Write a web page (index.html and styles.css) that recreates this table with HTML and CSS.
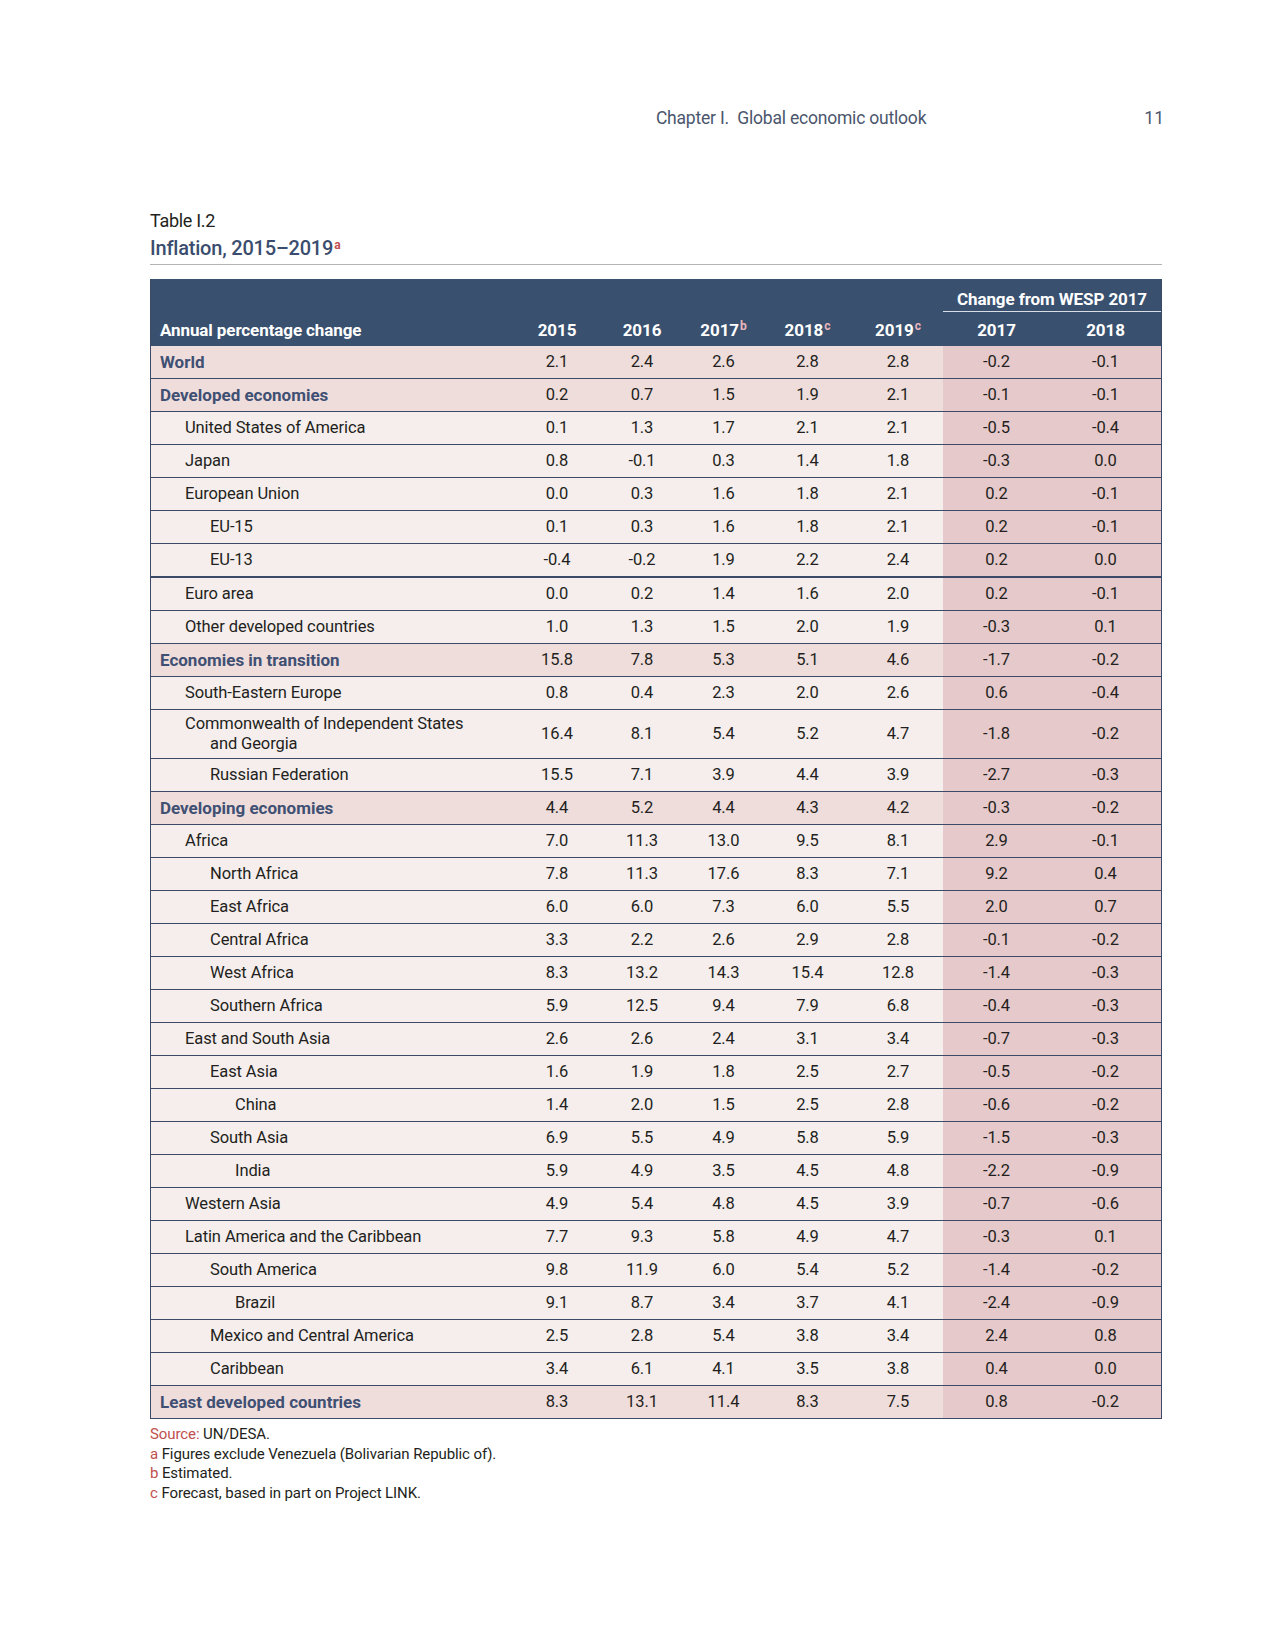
FILE: index.html
```html
<!DOCTYPE html>
<html lang="en">
<head>
<meta charset="utf-8">
<title>Table I.2 Inflation, 2015–2019</title>
<link rel="stylesheet" href="styles.css">
</head>
<body>
<div class="page">
  <header class="running">
    <span class="chapter">Chapter I.&nbsp; Global economic outlook</span>
    <span class="folio">11</span>
  </header>

  <div class="caption">
    <div class="table-no">Table I.2</div>
    <div class="table-title">Inflation, 2015–2019<sup class="fn-red">a</sup></div>
  </div>

  <div class="tbl-wrap">
  <table class="data">
    <colgroup>
      <col class="c-label"><col class="c-a"><col class="c-b"><col class="c-c"><col class="c-d"><col class="c-e"><col class="c-f"><col class="c-g">
    </colgroup>
    <thead>
      <tr class="h1">
        <th></th><th></th><th></th><th></th><th></th><th></th>
        <th colspan="2" class="wesp-span">Change from WESP 2017</th>
      </tr>
      <tr class="h2">
        <th class="lbl">Annual percentage change</th>
        <th>2015</th><th>2016</th><th>2017<sup>b</sup></th><th>2018<sup>c</sup></th><th>2019<sup>c</sup></th>
        <th>2017</th><th>2018</th>
      </tr>
    </thead>
    <tbody>
      <tr class="grp"><td class="lbl l0">World</td><td>2.1</td><td>2.4</td><td>2.6</td><td>2.8</td><td>2.8</td><td class="w">-0.2</td><td class="w">-0.1</td></tr>
      <tr class="grp"><td class="lbl l0">Developed economies</td><td>0.2</td><td>0.7</td><td>1.5</td><td>1.9</td><td>2.1</td><td class="w">-0.1</td><td class="w">-0.1</td></tr>
      <tr><td class="lbl l1">United States of America</td><td>0.1</td><td>1.3</td><td>1.7</td><td>2.1</td><td>2.1</td><td class="w">-0.5</td><td class="w">-0.4</td></tr>
      <tr><td class="lbl l1">Japan</td><td>0.8</td><td>-0.1</td><td>0.3</td><td>1.4</td><td>1.8</td><td class="w">-0.3</td><td class="w">0.0</td></tr>
      <tr><td class="lbl l1">European Union</td><td>0.0</td><td>0.3</td><td>1.6</td><td>1.8</td><td>2.1</td><td class="w">0.2</td><td class="w">-0.1</td></tr>
      <tr><td class="lbl l2">EU-15</td><td>0.1</td><td>0.3</td><td>1.6</td><td>1.8</td><td>2.1</td><td class="w">0.2</td><td class="w">-0.1</td></tr>
      <tr class="thick"><td class="lbl l2">EU-13</td><td>-0.4</td><td>-0.2</td><td>1.9</td><td>2.2</td><td>2.4</td><td class="w">0.2</td><td class="w">0.0</td></tr>
      <tr><td class="lbl l1">Euro area</td><td>0.0</td><td>0.2</td><td>1.4</td><td>1.6</td><td>2.0</td><td class="w">0.2</td><td class="w">-0.1</td></tr>
      <tr><td class="lbl l1">Other developed countries</td><td>1.0</td><td>1.3</td><td>1.5</td><td>2.0</td><td>1.9</td><td class="w">-0.3</td><td class="w">0.1</td></tr>
      <tr class="grp"><td class="lbl l0">Economies in transition</td><td>15.8</td><td>7.8</td><td>5.3</td><td>5.1</td><td>4.6</td><td class="w">-1.7</td><td class="w">-0.2</td></tr>
      <tr><td class="lbl l1">South-Eastern Europe</td><td>0.8</td><td>0.4</td><td>2.3</td><td>2.0</td><td>2.6</td><td class="w">0.6</td><td class="w">-0.4</td></tr>
      <tr class="tall"><td class="lbl hang">Commonwealth of Independent States and Georgia</td><td>16.4</td><td>8.1</td><td>5.4</td><td>5.2</td><td>4.7</td><td class="w">-1.8</td><td class="w">-0.2</td></tr>
      <tr><td class="lbl l2">Russian Federation</td><td>15.5</td><td>7.1</td><td>3.9</td><td>4.4</td><td>3.9</td><td class="w">-2.7</td><td class="w">-0.3</td></tr>
      <tr class="grp"><td class="lbl l0">Developing economies</td><td>4.4</td><td>5.2</td><td>4.4</td><td>4.3</td><td>4.2</td><td class="w">-0.3</td><td class="w">-0.2</td></tr>
      <tr><td class="lbl l1">Africa</td><td>7.0</td><td>11.3</td><td>13.0</td><td>9.5</td><td>8.1</td><td class="w">2.9</td><td class="w">-0.1</td></tr>
      <tr><td class="lbl l2">North Africa</td><td>7.8</td><td>11.3</td><td>17.6</td><td>8.3</td><td>7.1</td><td class="w">9.2</td><td class="w">0.4</td></tr>
      <tr><td class="lbl l2">East Africa</td><td>6.0</td><td>6.0</td><td>7.3</td><td>6.0</td><td>5.5</td><td class="w">2.0</td><td class="w">0.7</td></tr>
      <tr><td class="lbl l2">Central Africa</td><td>3.3</td><td>2.2</td><td>2.6</td><td>2.9</td><td>2.8</td><td class="w">-0.1</td><td class="w">-0.2</td></tr>
      <tr><td class="lbl l2">West Africa</td><td>8.3</td><td>13.2</td><td>14.3</td><td>15.4</td><td>12.8</td><td class="w">-1.4</td><td class="w">-0.3</td></tr>
      <tr><td class="lbl l2">Southern Africa</td><td>5.9</td><td>12.5</td><td>9.4</td><td>7.9</td><td>6.8</td><td class="w">-0.4</td><td class="w">-0.3</td></tr>
      <tr><td class="lbl l1">East and South Asia</td><td>2.6</td><td>2.6</td><td>2.4</td><td>3.1</td><td>3.4</td><td class="w">-0.7</td><td class="w">-0.3</td></tr>
      <tr><td class="lbl l2">East Asia</td><td>1.6</td><td>1.9</td><td>1.8</td><td>2.5</td><td>2.7</td><td class="w">-0.5</td><td class="w">-0.2</td></tr>
      <tr><td class="lbl l3">China</td><td>1.4</td><td>2.0</td><td>1.5</td><td>2.5</td><td>2.8</td><td class="w">-0.6</td><td class="w">-0.2</td></tr>
      <tr><td class="lbl l2">South Asia</td><td>6.9</td><td>5.5</td><td>4.9</td><td>5.8</td><td>5.9</td><td class="w">-1.5</td><td class="w">-0.3</td></tr>
      <tr><td class="lbl l3">India</td><td>5.9</td><td>4.9</td><td>3.5</td><td>4.5</td><td>4.8</td><td class="w">-2.2</td><td class="w">-0.9</td></tr>
      <tr><td class="lbl l1">Western Asia</td><td>4.9</td><td>5.4</td><td>4.8</td><td>4.5</td><td>3.9</td><td class="w">-0.7</td><td class="w">-0.6</td></tr>
      <tr><td class="lbl l1">Latin America and the Caribbean</td><td>7.7</td><td>9.3</td><td>5.8</td><td>4.9</td><td>4.7</td><td class="w">-0.3</td><td class="w">0.1</td></tr>
      <tr><td class="lbl l2">South America</td><td>9.8</td><td>11.9</td><td>6.0</td><td>5.4</td><td>5.2</td><td class="w">-1.4</td><td class="w">-0.2</td></tr>
      <tr><td class="lbl l3">Brazil</td><td>9.1</td><td>8.7</td><td>3.4</td><td>3.7</td><td>4.1</td><td class="w">-2.4</td><td class="w">-0.9</td></tr>
      <tr><td class="lbl l2">Mexico and Central America</td><td>2.5</td><td>2.8</td><td>5.4</td><td>3.8</td><td>3.4</td><td class="w">2.4</td><td class="w">0.8</td></tr>
      <tr><td class="lbl l2">Caribbean</td><td>3.4</td><td>6.1</td><td>4.1</td><td>3.5</td><td>3.8</td><td class="w">0.4</td><td class="w">0.0</td></tr>
      <tr class="grp"><td class="lbl l0">Least developed countries</td><td>8.3</td><td>13.1</td><td>11.4</td><td>8.3</td><td>7.5</td><td class="w">0.8</td><td class="w">-0.2</td></tr>
    </tbody>
  </table>
  </div>

  <div class="notes">
    <p><span class="red">Source:</span> UN/DESA.</p>
    <p><span class="red">a</span> Figures exclude Venezuela (Bolivarian Republic of).</p>
    <p><span class="red">b</span> Estimated.</p>
    <p><span class="red">c</span> Forecast, based in part on Project LINK.</p>
  </div>
</div>
</body>
</html>
```
FILE: styles.css
```css
html, body {
  margin: 0;
  padding: 0;
  background: #ffffff;
}

body {
  font-family: Roboto, "Liberation Sans", Arial, sans-serif;
  color: #231f20;
}

.page {
  width: 1012px;
  padding: 0 0 0 150px;
}

.running {
  display: flex;
  justify-content: flex-end;
  align-items: baseline;
  padding-top: 104px;
  height: 28px;
  font-size: 17.5px;
  color: #4b566d;
  line-height: 28px;
}

.chapter {
  margin-right: 218px;
  letter-spacing: -0.2px;
}

.folio {
  margin-right: -2px;
}

.caption {
  margin-top: 76px;
  border-bottom: 1px solid #b4b4b4;
  padding-bottom: 2px;
}

.table-no {
  font-size: 18px;
  line-height: 26px;
  color: #231f20;
  letter-spacing: -0.3px;
}

.table-title {
  font-size: 20px;
  font-weight: 500;
  line-height: 28px;
  color: #3b4d6e;
  letter-spacing: -0.2px;
}

.table-title sup {
  font-size: 12px;
  font-weight: 700;
  vertical-align: 6px;
  line-height: 0;
  margin-left: 1px;
}

.fn-red, .red {
  color: #c0504d;
}

.tbl-wrap {
  margin-top: 14px;
  border-left: 1px solid #3b4a66;
  border-right: 1px solid #3b4a66;
  box-sizing: border-box;
  width: 1012px;
}

.data {
  width: 100%;
  table-layout: fixed;
  border-collapse: separate;
  border-spacing: 0;
  font-size: 16.5px;
}

.c-label { width: 364px; }
.c-a { width: 84px; }
.c-b { width: 86px; }
.c-c { width: 77px; }
.c-d { width: 91px; }
.c-e { width: 90px; }
.c-f { width: 107px; }
.c-g { width: 111px; }

.data thead th {
  background: #39506f;
  color: #ffffff;
  font-weight: 700;
  font-size: 17px;
  text-align: center;
  padding: 0;
  letter-spacing: -0.1px;
}

.data thead .h1 th {
  padding-top: 8px;
  line-height: 24px;
  height: 24px;
}

.data thead .h1 .wesp-span {
  border-bottom: 1px solid #d9dee6;
}

.data thead .h2 th {
  line-height: 26px;
  padding: 5px 0 3px;
}

.data thead .h2 th.lbl {
  text-align: left;
  padding-left: 9px;
}

.data thead sup {
  font-size: 12px;
  font-weight: 700;
  color: #eab6bb;
  vertical-align: 6px;
  line-height: 0;
  margin-left: 1px;
}

.data tbody td {
  padding: 0;
  line-height: 32px;
  text-align: center;
  background: #f5eeed;
  border-bottom: 1px solid #3b4a66;
  color: #231f20;
  letter-spacing: -0.1px;
}

.data tbody tr.grp td {
  background: #efdddc;
}

.data tbody td.w,
.data tbody tr.grp td.w {
  background: #e6c9cb;
}

.data tbody tr.thick td {
  border-bottom-width: 2px;
}

.data tbody td.lbl {
  text-align: left;
}

.data tbody td.l0 {
  padding-left: 9px;
  color: #3f5073;
  font-weight: 700;
  font-size: 17px;
  letter-spacing: 0;
}

.data tbody td.l1 { padding-left: 34px; }
.data tbody td.l2 { padding-left: 59px; }
.data tbody td.l3 { padding-left: 84px; }

.data tbody tr.tall td {
  line-height: 20px;
  padding-top: 4px;
  padding-bottom: 4px;
}

.data tbody tr.tall td.hang {
  padding-left: 59px;
  padding-right: 30px;
  text-indent: -25px;
}

.notes {
  padding-top: 6px;
  font-size: 15px;
  line-height: 19.5px;
  color: #231f20;
  letter-spacing: -0.1px;
}

.notes p {
  margin: 0;
}
```
